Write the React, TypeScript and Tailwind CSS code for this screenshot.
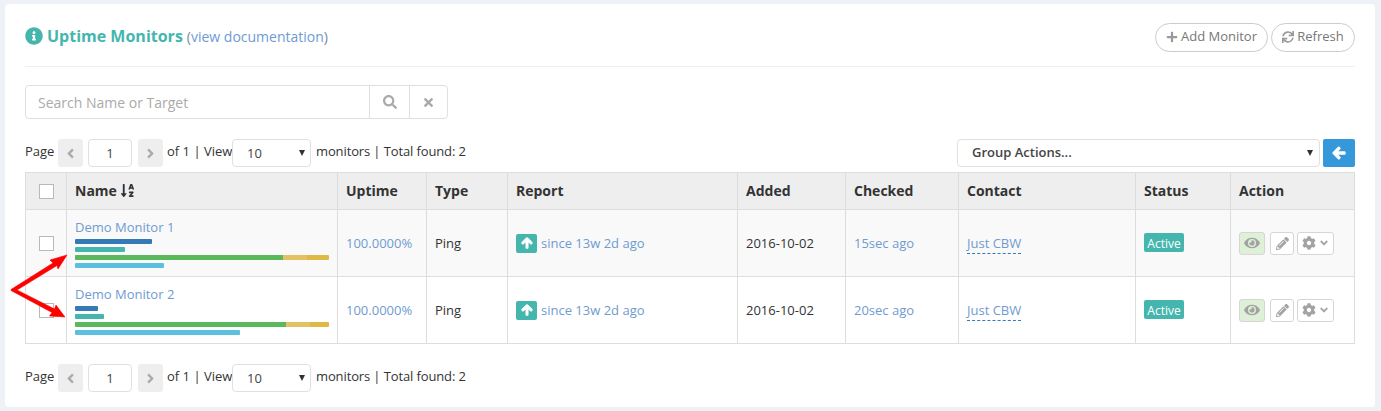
import React from "react";
import { FaInfoCircle, FaSearch, FaTimes, FaPlus, FaSync, FaArrowLeft, FaArrowUp, FaEye, FaPencilAlt, FaCog, FaAngleLeft, FaAngleRight, FaAngleDown, FaSortAlphaDown } from "react-icons/fa";

const Check = () => <span className="block w-[15px] h-[15px] mx-auto border border-[#b9b9b9] bg-white" />;

const Caret = ({ right }: { right: string }) => (
  <svg className={`absolute top-[11px] ${right} pointer-events-none`} width="6" height="6" viewBox="0 0 6 6">
    <path d="M0 0 H6 L3 6 Z" fill="#333" />
  </svg>
);

function Pager() {
  return (
    <div className="flex items-center h-7 text-[13px] text-[#333] whitespace-nowrap">
      <span className="w-[33px] -mt-[2px]">Page</span>
      <span className="w-[25px] h-7 bg-[#eeeeee] rounded-[3px] flex items-center justify-center text-[#aaa] text-[15px]"><FaAngleLeft /></span>
      <span className="ml-[5px] w-[44px] h-7 border border-[#e0e0e0] rounded-[4px] bg-white flex items-center justify-center pt-[2px] text-[#444]">1</span>
      <span className="ml-[6px] w-[25px] h-7 bg-[#eeeeee] rounded-[3px] flex items-center justify-center text-[#aaa] text-[15px]"><FaAngleRight /></span>
      <span className="ml-1 w-[65px] -mt-[2px]">of 1 | View</span>
      <span className="relative w-[79px] h-7">
        <select defaultValue="10" className="appearance-none w-full h-full border border-[#e0e0e0] rounded-[4px] bg-white pl-[14px] pt-[1px] text-[13px] text-[#444] outline-none">
          <option>10</option>
        </select>
        <Caret right="right-[6px]" />
      </span>
      <span className="ml-[5px] -mt-[2px] tracking-[-0.12px]">monitors | Total found: 2</span>
    </div>
  );
}

const Link = ({ children }: { children: React.ReactNode }) => <span className="text-[#6f9bd1]">{children}</span>;

function Bars({ a, b, c, d }: { a: number; b: number; c: number; d: number }) {
  const base = "h-[5px] rounded-[1px]";
  return (
    <div className="flex flex-col gap-[3px] mt-[3px]">
      <div className={`${base} bg-[#337ab7]`} style={{ width: a }} />
      <div className={`${base} bg-[#44b6ae]`} style={{ width: b }} />
      <div className={`${base} w-[254px] bg-[#dfb946] flex overflow-hidden`}>
        <div className="h-full bg-[#5cb85c]" style={{ width: c }} />
        <div className="h-full w-[24px] bg-[#e2c265]" />
      </div>
      <div className={`${base} bg-[#5bc0de]`} style={{ width: d }} />
    </div>
  );
}

function Row({ name, a, b, c, d, checked, even }: { name: string; a: number; b: number; c: number; d: number; checked: string; even: boolean }) {
  const td = "border border-[#dddddd] px-2 align-middle";
  const tdt = "border border-[#dddddd] px-2 pt-[2px] align-middle";
  return (
    <tr className={`h-[67px] text-[13px] text-[#333] ${even ? "bg-[#f9f9f9]" : "bg-white"}`}>
      <td className={td}><Check /></td>
      <td className={td}>
        <div className="text-[#6f9bd1] leading-[18px] -mt-[1px]">{name}</div>
        <Bars a={a} b={b} c={c} d={d} />
      </td>
      <td className={tdt}><Link>100.0000%</Link></td>
      <td className={tdt}>Ping</td>
      <td className={td}>
        <div className="flex items-center">
          <span className="w-[21px] h-[19px] bg-[#44b6ae] rounded-[2px] flex items-center justify-center text-white text-[12px]"><FaArrowUp className="stroke-[50]" /></span>
          <span className="ml-[4px] pt-[2px]"><Link>since 13w 2d ago</Link></span>
        </div>
      </td>
      <td className={tdt}>2016-10-02</td>
      <td className={tdt}><Link>{checked}</Link></td>
      <td className={tdt}><span className="text-[#6f9bd1] border-b border-dashed border-[#337ab7] pb-[1px]">Just CBW</span></td>
      <td className={td}><span className="inline-flex items-center justify-center w-10 h-[19px] pt-[2px] bg-[#44b6ae] text-white text-[12px] rounded-[2px]">Active</span></td>
      <td className={td}>
        <div className="flex items-center text-[#a3a3a3]">
          <span className="w-[26px] h-[23px] bg-[#dff0d8] border border-[#d6d6d6] rounded-[3px] flex items-center justify-center text-[16px]"><FaEye /></span>
          <span className="w-6 h-[23px] ml-[5px] bg-white border border-[#d6d6d6] rounded-[3px] flex items-center justify-center text-[13px]"><FaPencilAlt /></span>
          <span className="w-[37px] h-[23px] ml-[3px] bg-white border border-[#d6d6d6] rounded-[3px] flex items-center justify-center gap-[2px] text-[14px]"><FaCog /><FaAngleDown className="text-[12px]" /></span>
        </div>
      </td>
    </tr>
  );
}

export default function App() {
  const th = "border border-[#dddddd] px-2 pb-[2px] text-left text-[14px] font-bold text-[#333]";
  const widths = [41, 271, 89, 81, 230, 108, 113, 177, 95, 124];
  return (
    <div className="relative h-[411px] w-[1381px] overflow-hidden bg-[#eef2f7] pt-1 pl-[5px] pr-[6px] pb-1 font-['Open_Sans',sans-serif]">
      <div className="h-full bg-white rounded-[4px] px-5">
        <div className="flex items-center justify-between h-[63px] border-b border-[#eeeeee] pt-[2px]">
          <div className="flex items-center">
            <FaInfoCircle className="text-[#44b6ae] text-[18px]" />
            <span className="ml-[4px] text-[16px] font-bold text-[#44b6ae]">Uptime Monitors</span>
            <span className="ml-[4px] text-[14px] text-[#7a8aa0] mt-[1px]">(<span className="text-[#6f9bd1]">view documentation</span>)</span>
          </div>
          <div className="flex items-center gap-[3px] text-[13px] text-[#777] mt-[2px]">
            <span className="h-[29px] w-[113px] border border-[#cccccc] rounded-full flex items-center justify-center gap-[3px]"><FaPlus className="text-[12px] text-[#999]" />Add Monitor</span>
            <span className="h-[29px] w-[84px] border border-[#cccccc] rounded-full flex items-center justify-center gap-[3px]"><FaSync className="text-[12px] text-[#999]" />Refresh</span>
          </div>
        </div>

        <div className="mt-[18px] flex w-[423px] h-[34px] border border-[#dfdfdf] rounded-[4px]">
          <div className="w-[343px] pl-3 flex items-center text-[14px] text-[#aaaaaa]">Search Name or Target</div>
          <div className="w-10 border-l border-[#dfdfdf] flex items-center justify-center text-[#aaa] text-[14px]"><FaSearch /></div>
          <div className="flex-1 border-l border-[#dfdfdf] flex items-center justify-center text-[#aaa] text-[13px]"><FaTimes /></div>
        </div>

        <div className="mt-[20px] flex items-center justify-between">
          <Pager />
          <div className="flex items-center gap-[3px]">
            <span className="relative w-[363px] h-7">
              <select defaultValue="g" className="appearance-none w-full h-full border border-[#e0e0e0] rounded-[4px] bg-white pl-[14px] text-[13px] font-semibold text-[#444] outline-none">
                <option value="g">Group Actions...</option>
              </select>
              <Caret right="right-[7px]" />
            </span>
            <span className="w-8 h-7 bg-[#3498db] rounded-[2px] flex items-center justify-center text-white text-[14px]"><FaArrowLeft className="stroke-[40]" /></span>
          </div>
        </div>

        <table className="mt-[5px] w-[1330px] table-fixed border-collapse">
          <colgroup>
            {widths.map((w, i) => <col key={i} style={{ width: w }} />)}
          </colgroup>
          <thead>
            <tr className="h-[37px] bg-[#eeeeee]">
              <th className="border border-[#dddddd] px-2"><Check /></th>
              <th className={th}><span className="inline-flex items-center gap-[3px]">Name <FaSortAlphaDown className="text-[15px]" /></span></th>
              <th className={th}>Uptime</th>
              <th className={th}>Type</th>
              <th className={th}>Report</th>
              <th className={th}>Added</th>
              <th className={th}>Checked</th>
              <th className={th}>Contact</th>
              <th className={th}>Status</th>
              <th className={th}>Action</th>
            </tr>
          </thead>
          <tbody>
            <Row name="Demo Monitor 1" a={77} b={50} c={208} d={89} checked="15sec ago" even />
            <Row name="Demo Monitor 2" a={23} b={29} c={211} d={165} checked="20sec ago" even={false} />
          </tbody>
        </table>

        <div className="mt-[20px]"><Pager /></div>
      </div>

      <svg className="absolute left-0 top-0 pointer-events-none" width="80" height="340" viewBox="0 0 80 340">
        <path d="M67 255 L50 260 L53 263 L11 289.5 L11 290.5 L52 312.5 L49.5 316 L65 317 L56 305 L54.5 309 L17 290 L57 265.5 L58 269 Z" fill="#ff0000" stroke="#ff0000" strokeWidth="0.6" strokeLinejoin="round" />
      </svg>
    </div>
  );
}
